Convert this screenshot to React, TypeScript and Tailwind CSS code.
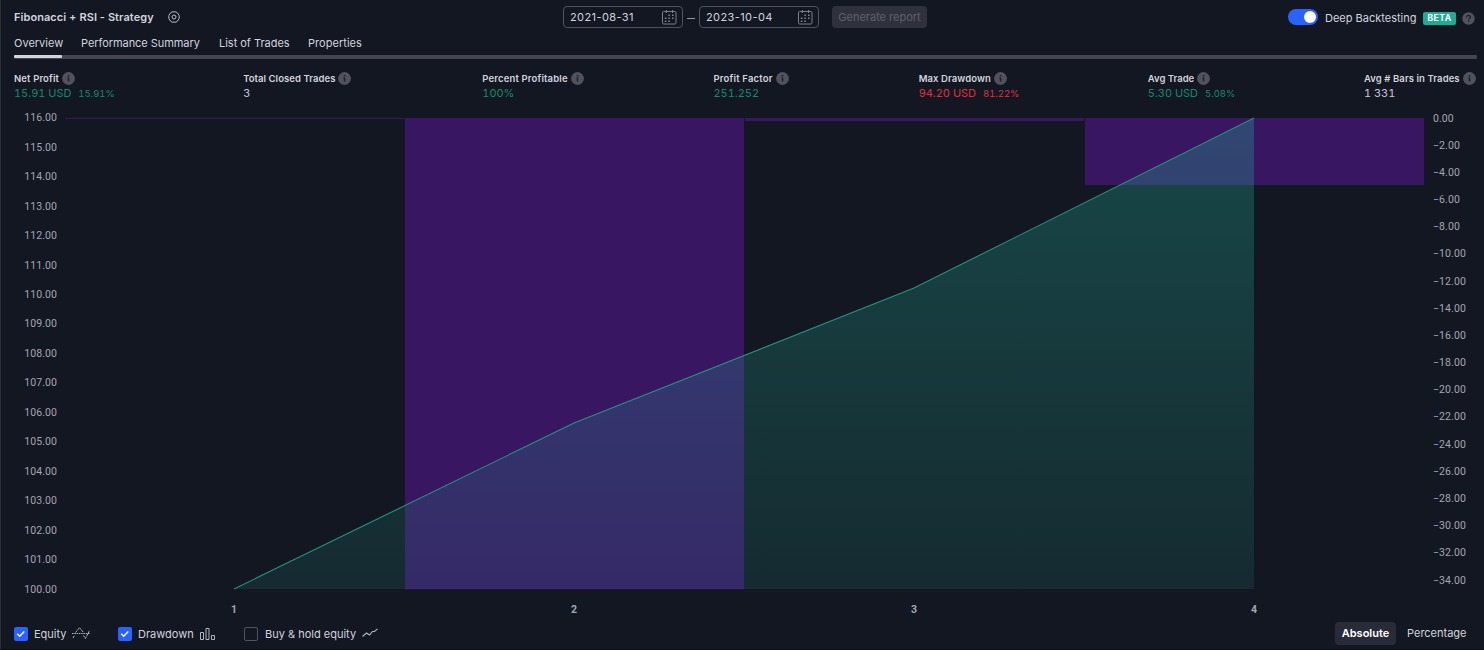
import React from "react";

type Metric = {
  label: string;
  value: string;
  extra?: string;
  tone: string;
  width: string;
  tracking: string;
};

const METRICS: Metric[] = [
  { label: "Net Profit", value: "15.91 USD", extra: "15.91%", tone: "text-[#128a6e]", width: "w-[99px]", tracking: "tracking-[0.14px]" },
  { label: "Total Closed Trades", value: "3", tone: "text-[#c5c8d1]", width: "w-[109px]", tracking: "tracking-[0.06px]" },
  { label: "Percent Profitable", value: "100%", tone: "text-[#128a6e]", width: "w-[101px]", tracking: "tracking-[0.16px]" },
  { label: "Profit Factor", value: "251.252", tone: "text-[#128a6e]", width: "w-[75px]", tracking: "tracking-[0.2px]" },
  { label: "Max Drawdown", value: "94.20 USD", extra: "81.22%", tone: "text-[#e0303f]", width: "w-[99px]", tracking: "tracking-[0.1px]" },
  { label: "Avg Trade", value: "5.30 USD", extra: "5.08%", tone: "text-[#128a6e]", width: "w-[86px]", tracking: "tracking-[0px]" },
  { label: "Avg # Bars in Trades", value: "1 331", tone: "text-[#c5c8d1]", width: "w-[111px]", tracking: "tracking-[0.09px]" },
];

function InfoIcon() {
  return (
    <svg width="13" height="13" viewBox="0 0 13 13" className="shrink-0">
      <circle cx="6.5" cy="6.5" r="6.4" fill="#50535e" />
      <rect x="5.8" y="3" width="1.5" height="1.5" fill="#1d202b" />
      <path d="M5.3 5.6h2v4h-1.5v-3h-.5z" fill="#1d202b" />
    </svg>
  );
}

function HelpIcon() {
  return (
    <svg width="13" height="13" viewBox="0 0 13 13" className="block shrink-0">
      <circle cx="6.5" cy="6.5" r="6.2" fill="#50535e" />
      <path d="M4.6 5.2c0-1.2.8-1.9 1.9-1.9s1.9.7 1.9 1.7c0 1.3-1.7 1.3-1.7 2.6" fill="none" stroke="#1d202b" strokeWidth="1.2" />
      <rect x="6" y="8.4" width="1.4" height="1.4" fill="#1d202b" />
    </svg>
  );
}

function SettingsIcon() {
  return (
    <svg width="12" height="12" viewBox="0 0 12 12" fill="none" stroke="#b8bbc5" strokeWidth="1">
      <path d="M4 .9h4L9.6 2l1.6 2.6v2.8L9.6 10 8 11.1H4L2.4 10 .8 7.4V4.6L2.4 2z" strokeLinejoin="round" />
      <circle cx="6" cy="6" r="2" />
    </svg>
  );
}

function CalendarIcon() {
  return (
    <svg width="15" height="15" viewBox="0 0 15 15" fill="none" stroke="#7c7f8a">
      <rect x=".5" y="1.5" width="13.5" height="12.5" rx="1.2" strokeWidth="1" />
      <path d="M4.5 0v3M10.5 0v3" strokeWidth="1" />
      <path d="M6.3 5.2h1.6M10 5.2h1.6M2.8 8.2h1.6M6.3 8.2h1.6M10 8.2h1.6M2.8 11.2h1.6M6.3 11.2h1.6" strokeWidth="1.5" />
    </svg>
  );
}

function DateField({ value }: { value: string }) {
  return (
    <div className="flex h-[22px] w-[120px] items-center justify-between rounded-[4px] border border-[#50535e] pr-[5px] pl-[6px]">
      <span className="pt-px text-[11px] leading-none tracking-[0.4px] text-[#d1d4dc]">{value}</span>
      <CalendarIcon />
    </div>
  );
}

function Checkbox({ checked }: { checked: boolean }) {
  return checked ? (
    <span className="flex size-[14px] items-center justify-center rounded-[2px] bg-[#2962ff]">
      <svg width="10" height="8" viewBox="0 0 10 8" fill="none" stroke="#fff" strokeWidth="1.4">
        <path d="M1.2 3.7l2.5 2.5 4.6-4.6" />
      </svg>
    </span>
  ) : (
    <span className="size-[14px] rounded-[2px] border border-[#50535e]" />
  );
}

const LEFT = Array.from({ length: 17 }, (_, i) => ({ text: `${116 - i}.00`, y: 7.5 + i * 29.48 }));
const RIGHT = Array.from({ length: 18 }, (_, i) => ({
  text: i === 0 ? "0.00" : `−${i * 2}.00`,
  y: 7.9 + i * 27.18,
}));
const TRADES = [
  { n: 1, x: 234, bar: 65, h: 1 },
  { n: 2, x: 574, bar: 405, h: 471.5 },
  { n: 3, x: 914, bar: 745, h: 3 },
  { n: 4, x: 1254, bar: 1085, h: 67 },
];

function Chart() {
  return (
    <svg width="1484" height="508" viewBox="0 0 1484 508" className="block shrink-0 font-['Roboto',sans-serif]">
      <defs>
        <linearGradient id="equity" x1="0" y1="8" x2="0" y2="479" gradientUnits="userSpaceOnUse">
          <stop offset="0" stopColor="#22ab94" stopOpacity="0.33" />
          <stop offset="1" stopColor="#22ab94" stopOpacity="0.13" />
        </linearGradient>
      </defs>
      {TRADES.map((t) => (
        <rect key={t.n} x={t.bar} y="8" width="339" height={t.h} fill="#381661" />
      ))}
      <path d="M234 479L574 313 914 178 1254 8V479z" fill="url(#equity)" />
      <path d="M234 479L574 313 914 178 1254 8" fill="none" stroke="#22937f" strokeWidth="1.1" />
      <g className="fill-[#a3a6af] text-[10.5px] tracking-[0.1px]">
        {LEFT.map((l) => (
          <text key={l.text} x="57" y={l.y + 3.6} textAnchor="end">{l.text}</text>
        ))}
        {RIGHT.map((l) => (
          <text key={l.text} x="1433" y={l.y + 3.6}>{l.text}</text>
        ))}
      </g>
      <g className="fill-[#a3a6af] text-[10.5px] font-bold">
        {TRADES.map((t) => (
          <text key={t.n} x={t.x} y="503" textAnchor="middle">{t.n}</text>
        ))}
      </g>
    </svg>
  );
}

export default function App() {
  return (
    <div className="flex h-[650px] w-[1484px] flex-col overflow-hidden border-b border-[#0b0d14] bg-[#131722] font-['Inter',sans-serif] whitespace-nowrap text-[#d1d4dc] shadow-[inset_1px_0_0_#2a2e39]">
      <header className="grid h-[34px] shrink-0 grid-cols-[563px_1fr_auto] items-center pr-[9px]">
        <div className="flex items-center gap-[14px] pl-[14px]">
          <h1 className="w-[140px] text-[11px] leading-none font-semibold tracking-[0.07px]">Fibonacci + RSI - Strategy</h1>
          <SettingsIcon />
        </div>
        <div className="flex items-center">
          <DateField value="2021-08-31" />
          <span className="mx-[4px] mt-[3px] h-px w-[8px] bg-[#9598a1]" />
          <DateField value="2023-10-04" />
          <button className="ml-[13px] h-[22px] w-[95px] rounded-[4px] bg-[#2f323d] text-[11px] leading-none tracking-[-0.01px] text-[#5d606b]">
            Generate report
          </button>
        </div>
        <div className="flex items-center">
          <span className="flex h-[16px] w-[30px] items-center justify-end rounded-full bg-[#2962ff] pr-[2px]">
            <span className="size-[12px] rounded-full bg-white" />
          </span>
          <span className="ml-[7px] w-[91px] pt-[2px] text-[11px] leading-none">Deep Backtesting</span>
          <span className="mt-[2px] ml-[7px] flex h-[13px] w-[33px] items-center justify-center rounded-[2px] bg-[#22ab94] text-[8.5px] leading-none font-bold tracking-[0.5px] text-white">
            BETA
          </span>
          <span className="mt-[2px] ml-[6px]">
            <HelpIcon />
          </span>
        </div>
      </header>

      <nav className="flex h-[21px] shrink-0 pt-[4px] pl-[14px] text-[11px] leading-[11px]">
        <span className="w-[67px]">Overview</span>
        <span className="w-[138px] tracking-[-0.06px]">Performance Summary</span>
        <span className="w-[89px] tracking-[-0.02px]">List of Trades</span>
        <span className="tracking-[0.04px]">Properties</span>
      </nav>
      <div className="mr-[7px] ml-[14px] h-[4px] shrink-0 rounded-[1px] bg-[#434651]">
        <div className="h-[3px] w-[48px] rounded-[1px] bg-[#d1d4dc]" />
      </div>

      <section className="flex h-[51px] shrink-0 justify-between pt-[13px] pr-[9px] pl-[14px]">
        {METRICS.map((m) => (
          <div key={m.label} className={m.width}>
            <div className="flex h-[13px] items-center gap-[3px]">
              <span className={`text-[9.5px] leading-none font-semibold ${m.tracking}`}>{m.label}</span>
              <InfoIcon />
            </div>
            <div className={`mt-px flex items-baseline gap-[7px] text-[11px] leading-[14px] tracking-[-0.03px] tabular-nums ${m.tone}`}>
              <span>{m.value}</span>
              {m.extra && <span className="text-[9.5px]">{m.extra}</span>}
            </div>
          </div>
        ))}
      </section>

      <Chart />

      <footer className="flex flex-1 items-center justify-between pr-[11px] pl-[14px] text-[11px] leading-none">
        <div className="flex items-center pt-px">
          <Checkbox checked />
          <span className="ml-[6px] w-[38px]">Equity</span>
          <svg width="18" height="14" viewBox="0 0 18 14" fill="none" stroke="#b2b5be" strokeWidth="1">
            <path d="M0 6.500h18" strokeDasharray="1.5 .8" />
            <path d="M1 11l1.500-2.500M3.500 5.500L7.500 .700 11.500 5.500M11.500 8.500L13.500 11.500 15 8.500 17.500 3.500" strokeDasharray="2.500 .6" />
          </svg>
          <span className="ml-[28px]"><Checkbox checked /></span>
          <span className="ml-[6px] w-[62px]">Drawdown</span>
          <svg width="16" height="12" viewBox="0 0 16 12" fill="none" stroke="#b2b5be" strokeWidth="1">
            <path d="M.5 4.500h3v7h-3zM6 .500h3v11H6zM11.500 7.500h3v4h-3z" />
          </svg>
          <span className="ml-[28px] flex"><Checkbox checked={false} /></span>
          <span className="ml-[7px] w-[97px]">Buy &amp; hold equity</span>
          <svg width="17" height="10" viewBox="0 0 17 10" className="mb-[3px]" fill="none" stroke="#b2b5be" strokeWidth="1.1">
            <path d="M.5 8.500L4.500 5l3 2 3-3.500h2L15.500 .800" />
          </svg>
        </div>
        <div className="flex items-center">
          <span className="flex h-[23px] w-[61px] items-center justify-center rounded-[4px] bg-[#2a2b38] font-semibold text-white">Absolute</span>
          <span className="ml-[11px] w-[66px]">Percentage</span>
        </div>
      </footer>
    </div>
  );
}
